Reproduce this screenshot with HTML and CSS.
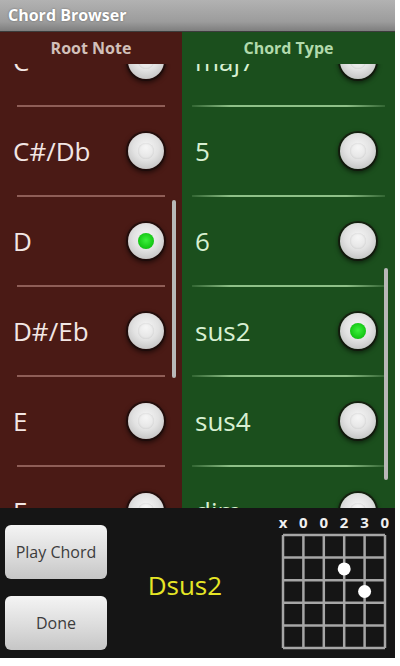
FILE: index.html
```html
<!DOCTYPE html>
<html>
<head>
  <meta charset="utf-8">
  <title>Chord Browser</title>
  <link rel="stylesheet" href="styles.css">
</head>
<body>

<div class="app">
  <div class="titlebar">Chord Browser</div>

  <div class="columns">
    <div class="column root">
      <div class="col-head">Root Note</div>
      <div class="list">
        <div class="rows">
          <div class="row"><span class="label">C</span><span class="radio"></span></div>
          <div class="divider"></div>
          <div class="row"><span class="label">C#/Db</span><span class="radio"></span></div>
          <div class="divider"></div>
          <div class="row"><span class="label">D</span><span class="radio checked"></span></div>
          <div class="divider"></div>
          <div class="row"><span class="label">D#/Eb</span><span class="radio"></span></div>
          <div class="divider"></div>
          <div class="row"><span class="label">E</span><span class="radio"></span></div>
          <div class="divider"></div>
          <div class="row"><span class="label">F</span><span class="radio"></span></div>
        </div>
        <div class="scrollbar"></div>
      </div>
    </div>

    <div class="column type">
      <div class="col-head">Chord Type</div>
      <div class="list">
        <div class="rows">
          <div class="row"><span class="label">maj7</span><span class="radio"></span></div>
          <div class="divider"></div>
          <div class="row"><span class="label">5</span><span class="radio"></span></div>
          <div class="divider"></div>
          <div class="row"><span class="label">6</span><span class="radio"></span></div>
          <div class="divider"></div>
          <div class="row"><span class="label">sus2</span><span class="radio checked"></span></div>
          <div class="divider"></div>
          <div class="row"><span class="label">sus4</span><span class="radio"></span></div>
          <div class="divider"></div>
          <div class="row"><span class="label">dim</span><span class="radio"></span></div>
        </div>
        <div class="scrollbar"></div>
      </div>
    </div>
  </div>

  <div class="panel">
    <div class="buttons">
      <button class="btn">Play Chord</button>
      <button class="btn">Done</button>
    </div>
    <div class="chord-name">Dsus2</div>
    <div class="diagram">
      <div class="open-strings">
        <span>x</span><span>0</span><span>0</span><span>2</span><span>3</span><span>0</span>
      </div>
      <svg class="fretboard" width="106" height="117" viewBox="0 0 106 117">
        <g stroke="#a6a6a6" stroke-width="2.5" fill="none">
          <line x1="2" y1="2" x2="2" y2="115"/>
          <line x1="22.4" y1="2" x2="22.4" y2="115"/>
          <line x1="42.8" y1="2" x2="42.8" y2="115"/>
          <line x1="63.2" y1="2" x2="63.2" y2="115"/>
          <line x1="83.6" y1="2" x2="83.6" y2="115"/>
          <line x1="104" y1="2" x2="104" y2="115"/>
          <line x1="2" y1="2" x2="104" y2="2"/>
          <line x1="2" y1="24.6" x2="104" y2="24.6"/>
          <line x1="2" y1="47.2" x2="104" y2="47.2"/>
          <line x1="2" y1="69.8" x2="104" y2="69.8"/>
          <line x1="2" y1="92.4" x2="104" y2="92.4"/>
          <line x1="2" y1="115" x2="104" y2="115"/>
        </g>
        <circle cx="63.2" cy="35.9" r="6.5" fill="#fff"/>
        <circle cx="83.6" cy="58.5" r="6.5" fill="#fff"/>
      </svg>
    </div>
  </div>
</div>

</body>
</html>
```

FILE: styles.css
```css
body {
  margin: 0;
  background: #fff;
  font-family: "Open Sans", "DejaVu Sans", sans-serif;
}
.app {
  width: 395px;
  height: 658px;
  display: flex;
  flex-direction: column;
  overflow: hidden;
}
.titlebar {
  height: 31px;
  line-height: 31px;
  padding-left: 8px;
  color: #fff;
  font-size: 16px;
  font-weight: bold;
  background: linear-gradient(#b2b2b2, #9c9c9c 70%, #7e7e7e);
  border-bottom: 1px solid #3c3c3c;
  text-shadow: 0 0 2px rgba(0,0,0,0.4);
}
.columns {
  display: flex;
  height: 476px;
}
.column {
  display: flex;
  flex-direction: column;
}
.root {
  width: 182px;
  background: #4a1a15;
  color: #f2e6e4;
}
.type {
  width: 213px;
  background: #1b4f1d;
  color: #d8f0d2;
}
.col-head {
  height: 30px;
  line-height: 28px;
  padding-top: 2px;
  text-align: center;
  font-size: 16px;
  font-weight: bold;
}
.root .col-head {
  color: #d2c0ba;
}
.type .col-head {
  color: #b2daac;
}
.list {
  position: relative;
  height: 444px;
  overflow: hidden;
}
.rows {
  margin-top: -47px;
}
.row {
  height: 88px;
  display: flex;
  align-items: center;
  justify-content: space-between;
  padding: 0 18px 0 13px;
}
.type .row {
  padding-right: 19px;
}
.label {
  font-size: 26px;
}
.divider {
  height: 2px;
  margin: 0 17px;
  background: #8f5e57;
}
.type .divider {
  margin: 0 10px;
  background: linear-gradient(to right, rgba(120,170,115,0.25), #8fc088 20%, #8fc088 80%, rgba(120,170,115,0.25));
}
.radio {
  position: relative;
  width: 36px;
  height: 36px;
  border-radius: 50%;
  background: radial-gradient(circle at 50% 40%, #f6f6f6 0, #e2e2e2 45%, #c4c4c4 80%, #9a9a9a 100%);
  box-shadow: 0 0 0 2px rgba(20,10,10,0.6), 0 2px 4px 2px rgba(0,0,0,0.5);
}
.radio::before {
  content: "";
  position: absolute;
  left: 10px;
  top: 10px;
  width: 16px;
  height: 16px;
  border-radius: 50%;
  box-shadow: inset 0 0 2px rgba(0,0,0,0.15);
}
.radio.checked::after {
  content: "";
  position: absolute;
  left: 10px;
  top: 10px;
  width: 16px;
  height: 16px;
  border-radius: 50%;
  background: radial-gradient(circle at 50% 45%, #3cf03c, #12c412 70%, #0a8a0a);
}
.scrollbar {
  position: absolute;
  width: 4px;
  border-radius: 2px;
  background: #b8b8b8;
}
.root .scrollbar {
  left: 172px;
  top: 136px;
  height: 178px;
}
.type .scrollbar {
  left: 202px;
  top: 204px;
  height: 212px;
}
.panel {
  height: 150px;
  display: flex;
  background: #151515;
}
.buttons {
  display: flex;
  flex-direction: column;
  gap: 17px;
  padding: 17px 0 0 5px;
}
.btn {
  width: 102px;
  height: 54px;
  border: none;
  border-radius: 6px;
  background: linear-gradient(#f4f4f4, #dcdcdc 55%, #c6c6c6);
  color: #3c3c3c;
  font-family: "Open Sans", "DejaVu Sans", sans-serif;
  font-size: 16px;
  padding: 0;
}
.chord-name {
  flex: 1;
  display: flex;
  align-items: center;
  justify-content: center;
  padding: 4px 10px 0 0;
  color: #e6e626;
  font-size: 26px;
}
.diagram {
  width: 122.2px;
  padding-top: 4px;
}
.open-strings {
  display: flex;
  height: 20px;
  line-height: 20px;
}
.open-strings span {
  width: 20.4px;
  text-align: center;
  color: #f0f0f0;
  font-size: 15px;
  font-weight: bold;
}
.fretboard {
  display: block;
  margin: 1px 0 0 8.2px;
}
```
